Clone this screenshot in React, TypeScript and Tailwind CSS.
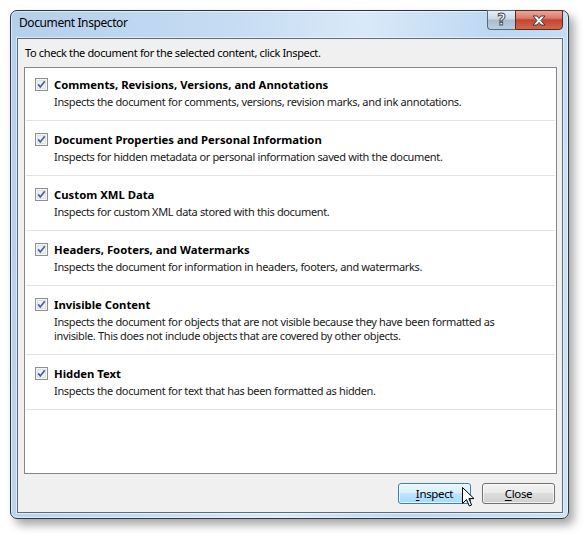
import { ReactNode } from "react";

type Item = {
  title: string;
  desc: ReactNode;
};

const items: Item[] = [
  {
    title: "Comments, Revisions, Versions, and Annotations",
    desc: "Inspects the document for comments, versions, revision marks, and ink annotations.",
  },
  {
    title: "Document Properties and Personal Information",
    desc: "Inspects for hidden metadata or personal information saved with the document.",
  },
  {
    title: "Custom XML Data",
    desc: "Inspects for custom XML data stored with this document.",
  },
  {
    title: "Headers, Footers, and Watermarks",
    desc: "Inspects the document for information in headers, footers, and watermarks.",
  },
  {
    title: "Invisible Content",
    desc: (
      <>
        Inspects the document for objects that are not visible because they have been formatted as
        <br />
        invisible. This does not include objects that are covered by other objects.
      </>
    ),
  },
  {
    title: "Hidden Text",
    desc: "Inspects the document for text that has been formatted as hidden.",
  },
];

function CheckBox() {
  return (
    <svg width="13" height="13" viewBox="0 0 13 13" className="shrink-0">
      <rect x="0.5" y="0.5" width="12" height="12" fill="#f6f6f6" stroke="#8e8f8f" />
      <rect x="2" y="2" width="9" height="9" fill="#dde1e8" />
      <rect x="3" y="3" width="7" height="7" fill="#eef0f4" />
      <path d="M3.2 6.4 L5.3 9 L9.8 3.2" stroke="#4d5f96" strokeWidth="1.7" fill="none" />
    </svg>
  );
}

function Cursor() {
  return (
    <svg width="13" height="21" viewBox="0 0 13 21" className="absolute left-[451px] top-[476px]">
      <path
        d="M0.5 0.5 L0.5 16.5 L4.5 12.5 L7.3 19 L9.6 18 L6.9 11.6 L12 11.6 Z"
        fill="#ffffff"
        stroke="#000000"
        strokeWidth="1"
      />
    </svg>
  );
}

export default function App() {
  return (
    <div className="w-[588px] h-[538px] bg-white pl-[10px] pt-[10px] font-['Noto_Sans',sans-serif] text-[11px] tracking-[-0.35px] text-black">
      <div className="relative w-[559px] h-[509px] rounded-[7px] border border-[#2b3440] bg-[linear-gradient(100deg,#b4cfeb_0%,#c6dcf3_35%,#d9e9f8_55%,#bed8f2_75%,#cce2f7_100%)] shadow-[5px_6px_10px_rgba(0,0,0,0.35),inset_0_0_0_1px_rgba(255,255,255,0.55)] flex flex-col">
        {/* title bar */}
        <div className="h-[27px] flex items-start">
          <span className="ml-[8px] mt-[4px] text-[12px] tracking-[-0.4px] leading-[16px] text-black">Document Inspector</span>
          <div className="ml-auto mr-[5px] -mt-[1px] flex">
            <div className="w-[28px] h-[20px] rounded-bl-[4px] border border-[#5c6875] border-r-0 bg-[linear-gradient(#e6eef7_0%,#cbd8e6_45%,#a9bccf_50%,#bccde0_100%)] flex items-center justify-center">
              <span className="text-[15px] leading-none font-bold tracking-normal text-white [-webkit-text-stroke:1px_#4a4f57] font-['DejaVu_Sans',sans-serif]">?</span>
            </div>
            <div className="w-[48px] h-[20px] rounded-br-[4px] border border-[#5a2a22] bg-[linear-gradient(#e9a99a_0%,#d9796a_40%,#c4432f_50%,#cf6a4c_100%)] flex items-center justify-center">
              <svg width="14" height="11" viewBox="0 0 14 11">
                <path
                  d="M1 1 L5 1 L7 3.5 L9 1 L13 1 L9 5.5 L13 10 L9 10 L7 7.5 L5 10 L1 10 L5 5.5 Z"
                  fill="#ffffff"
                  stroke="#3b3b3b"
                  strokeWidth="1"
                  strokeLinejoin="round"
                />
              </svg>
            </div>
          </div>
        </div>

        {/* client area */}
        <div className="ml-[6px] mr-[5px] mb-[5px] flex-1 border border-[#5f6b78] bg-[#f0f0f0] flex flex-col pt-[6px] shadow-[0_0_0_1px_rgba(255,255,255,0.5)]">
          <div className="pl-[7px] h-[16px] leading-[16px]">
            To check the document for the selected content, click Inspect.
          </div>
          <div className="mt-[6px] ml-[6px] w-[533px] h-[407px] border border-[#828790] bg-white">
            {items.map((item) => (
              <div key={item.title} className="mx-[1px] border-b border-[#e3e3e3] pt-[11px] first:pt-[9px] pb-[11px] pl-[9px] flex gap-[6px]">
                <div className="pt-[1px]">
                  <CheckBox />
                </div>
                <div className="flex flex-col">
                  <div className="font-bold text-[11.3px] tracking-normal leading-[15px]">{item.title}</div>
                  <div className="mt-[3px] leading-[14px] text-[#1a1a1a]">{item.desc}</div>
                </div>
              </div>
            ))}
          </div>
          <div className="mt-[9px] pr-[7px] flex justify-end gap-[11px]">
            <button className="w-[73px] h-[21px] rounded-[3px] border border-[#3c7fb1] bg-[linear-gradient(#eaf6fd_0%,#d9f0fc_45%,#bee6fd_50%,#a7d9f5_100%)] shadow-[inset_0_0_0_1px_rgba(255,255,255,0.7)] leading-[19px] text-[11.5px]">
              <span className="underline underline-offset-2">I</span>nspect
            </button>
            <button className="w-[73px] h-[21px] rounded-[3px] border border-[#707070] bg-[linear-gradient(#f2f2f2_0%,#ebebeb_45%,#dddddd_50%,#cfcfcf_100%)] shadow-[inset_0_0_0_1px_rgba(255,255,255,0.7)] leading-[19px] text-[11.5px]">
              <span className="underline underline-offset-2">C</span>lose
            </button>
          </div>
        </div>

        <Cursor />
      </div>
    </div>
  );
}
